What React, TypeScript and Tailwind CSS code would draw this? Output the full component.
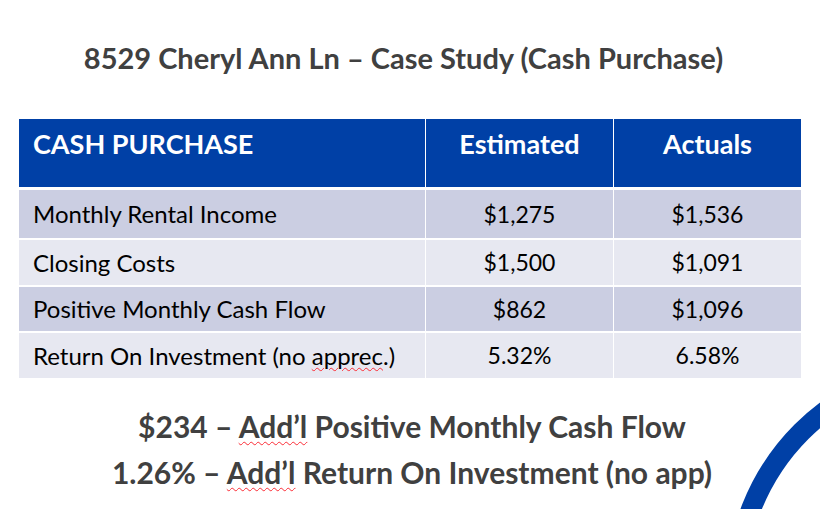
import React from "react";

const ROWS: { label: React.ReactNode; est: string; act: string; h: string; bg: string }[] = [
  { label: "Monthly Rental Income", est: "$1,275", act: "$1,536", h: "h-[48px]", bg: "bg-[#cbcee2]" },
  { label: "Closing Costs", est: "$1,500", act: "$1,091", h: "h-[45px]", bg: "bg-[#e7e8f1]" },
  { label: "Positive Monthly Cash Flow", est: "$862", act: "$1,096", h: "h-[44px]", bg: "bg-[#cbcee2]" },
  {
    label: (
      <span>
        Return On Investment (no{" "}
        <span className="underline decoration-wavy decoration-red-500 decoration-1 underline-offset-2">apprec</span>.)
      </span>
    ),
    est: "5.32%",
    act: "6.58%",
    h: "h-[45px]",
    bg: "bg-[#e7e8f1]",
  },
];

const Squiggle = ({ children }: { children: React.ReactNode }) => (
  <span className="underline decoration-wavy decoration-red-500 decoration-1 underline-offset-[3px]">{children}</span>
);

export default function App() {
  return (
    <div
      className="relative w-[820px] h-[509px] overflow-hidden bg-white"
      style={{ fontFamily: "Lato, 'Open Sans', sans-serif" }}
    >
      <div className="h-[119px] flex items-center justify-center pr-[13px] pb-[4px]">
        <h1 className="text-[29px] font-bold text-[#404040]">
          8529 Cheryl Ann Ln – Case Study (Cash Purchase)
        </h1>
      </div>

      <div className="ml-[19px] w-[782px] grid grid-cols-[406px_187px_187px] gap-x-px">
        <div className="h-[68px] bg-[#0040a6] text-white font-bold text-[27px] pl-[14px] pt-[5px]">
          CASH PURCHASE
        </div>
        <div className="h-[68px] bg-[#0040a6] text-white font-bold text-[27px] text-center pt-[5px]">
          Estimated
        </div>
        <div className="h-[68px] bg-[#0040a6] text-white font-bold text-[27px] text-center pt-[5px]">
          Actuals
        </div>
        <div className="col-span-3 h-[3px]" />
        {ROWS.map((r, i) => (
          <React.Fragment key={i}>
            <div className={`${r.h} ${r.bg} flex items-center pl-[14px] text-[24px] text-black`}>{r.label}</div>
            <div className={`${r.h} ${r.bg} flex items-center justify-center text-[23px] text-black`}>{r.est}</div>
            <div className={`${r.h} ${r.bg} flex items-center justify-center text-[23px] text-black`}>{r.act}</div>
            {i < ROWS.length - 1 && <div className="col-span-3 h-[2px]" />}
          </React.Fragment>
        ))}
      </div>

      <div className="mt-[25px] flex flex-col items-center text-[30px] font-bold text-[#404040] leading-[46px] pl-[4px]">
        <div>
          $234 – <Squiggle>Add’l</Squiggle> Positive Monthly Cash Flow
        </div>
        <div>
          1.26% – <Squiggle>Add’l</Squiggle> Return On Investment (no app)
        </div>
      </div>

      <svg className="absolute left-0 top-0" width="820" height="509" viewBox="0 0 820 509">
        <circle cx="960" cy="590" r="224" fill="none" stroke="#0040a6" strokeWidth="20" />
      </svg>
    </div>
  );
}
